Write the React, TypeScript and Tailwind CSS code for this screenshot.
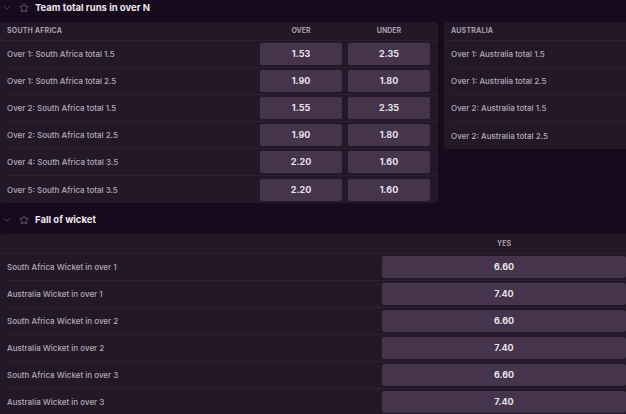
import { ChevronDown, Star } from 'lucide-react';

const saRows = [
  { label: 'Over 1: South Africa total 1.5', over: '1.53', under: '2.35' },
  { label: 'Over 1: South Africa total 2.5', over: '1.90', under: '1.80' },
  { label: 'Over 2: South Africa total 1.5', over: '1.55', under: '2.35' },
  { label: 'Over 2: South Africa total 2.5', over: '1.90', under: '1.80' },
  { label: 'Over 4: South Africa total 3.5', over: '2.20', under: '1.60' },
  { label: 'Over 5: South Africa total 3.5', over: '2.20', under: '1.60' },
];

const ausRows = [
  'Over 1: Australia total 1.5',
  'Over 1: Australia total 2.5',
  'Over 2: Australia total 1.5',
  'Over 2: Australia total 2.5',
];

const wicketRows = [
  { label: 'South Africa Wicket in over 1', yes: '6.60' },
  { label: 'Australia Wicket in over 1', yes: '7.40' },
  { label: 'South Africa Wicket in over 2', yes: '6.60' },
  { label: 'Australia Wicket in over 2', yes: '7.40' },
  { label: 'South Africa Wicket in over 3', yes: '6.60' },
  { label: 'Australia Wicket in over 3', yes: '7.40' },
];

const SectionHeader = ({ title }: { title: string }) => (
  <div className="h-[28px] flex items-center pl-[2px]">
    <ChevronDown className="w-[10px] h-[10px] text-[#6f6374]" strokeWidth={1.5} />
    <Star className="w-[10px] h-[10px] text-[#8d8192] ml-[7px]" strokeWidth={1.6} />
    <span className="ml-[6px] text-[9.5px] font-bold text-[#ece6ee]">{title}</span>
  </div>
);

const Odd = ({ value, wide }: { value: string; wide?: boolean }) => (
  <button
    className={`${wide ? 'w-[244px]' : 'w-[82px]'} h-[22px] rounded-[2px] bg-[#45344b] text-[9px] font-bold text-[#e8e2ea] flex items-center justify-center`}
  >
    {value}
  </button>
);

const App = () => {
  return (
    <div
      className="w-[626px] h-[414px] overflow-hidden bg-[#170a1c]"
      style={{ fontFamily: 'Inter, "Noto Sans", sans-serif' }}
    >
      <div className="-mt-[6px]">
        <SectionHeader title="Team total runs in over N" />
        <div className="flex gap-[6px] items-start">
          <div className="w-[438px] bg-[#231828] rounded-[4px]">
            <div className="h-[19px] flex items-center pl-[7px] pr-[8px] pt-[1px] border-b border-[#2d2131]">
              <span className="flex-1 text-[7px] font-bold text-[#a99dad] uppercase tracking-[0.2px]">South Africa</span>
              <span className="w-[82px] text-center text-[7px] font-bold text-[#a99dad]">OVER</span>
              <span className="w-[82px] ml-[6px] text-center text-[7px] font-bold text-[#a99dad]">UNDER</span>
            </div>
            {saRows.map((r, i) => (
              <div key={i} className="pl-[7px]">
                <div
                  className={`h-[27px] flex items-center pr-[8px] ${i < saRows.length - 1 ? 'border-b border-[#2d2131]' : ''}`}
                >
                  <span className="flex-1 text-[8px] font-medium text-[#b4a9b8]">{r.label}</span>
                  <Odd value={r.over} />
                  <div className="ml-[6px]">
                    <Odd value={r.under} />
                  </div>
                </div>
              </div>
            ))}
          </div>
          <div className="flex-1 bg-[#231828] rounded-l-[4px]">
            <div className="h-[19px] flex items-center pl-[7px] pt-[1px] border-b border-[#2d2131]">
              <span className="text-[7px] font-bold text-[#a99dad] uppercase tracking-[0.2px]">Australia</span>
            </div>
            {ausRows.map((r, i) => (
              <div key={i} className="pl-[7px]">
                <div
                  className={`h-[27px] flex items-center ${i < ausRows.length - 1 ? 'border-b border-[#2d2131]' : ''}`}
                >
                  <span className="text-[8px] font-medium text-[#b4a9b8]">{r}</span>
                </div>
              </div>
            ))}
          </div>
        </div>
        <div className="h-[3px]" />
        <SectionHeader title="Fall of wicket" />
        <div className="bg-[#231828] rounded-tl-[4px]">
          <div className="h-[20px] flex items-center pt-[2px] border-b border-[#2d2131]">
            <span className="flex-1" />
            <span className="w-[244px] text-center text-[7px] font-bold text-[#a99dad]">YES</span>
          </div>
          {wicketRows.map((r, i) => (
            <div key={i} className="pl-[7px]">
              <div className="h-[27px] flex items-center border-b border-[#2d2131]">
                <span className="flex-1 text-[8px] font-medium text-[#b4a9b8]">{r.label}</span>
                <Odd value={r.yes} wide />
              </div>
            </div>
          ))}
        </div>
      </div>
    </div>
  );
};

export default App;
